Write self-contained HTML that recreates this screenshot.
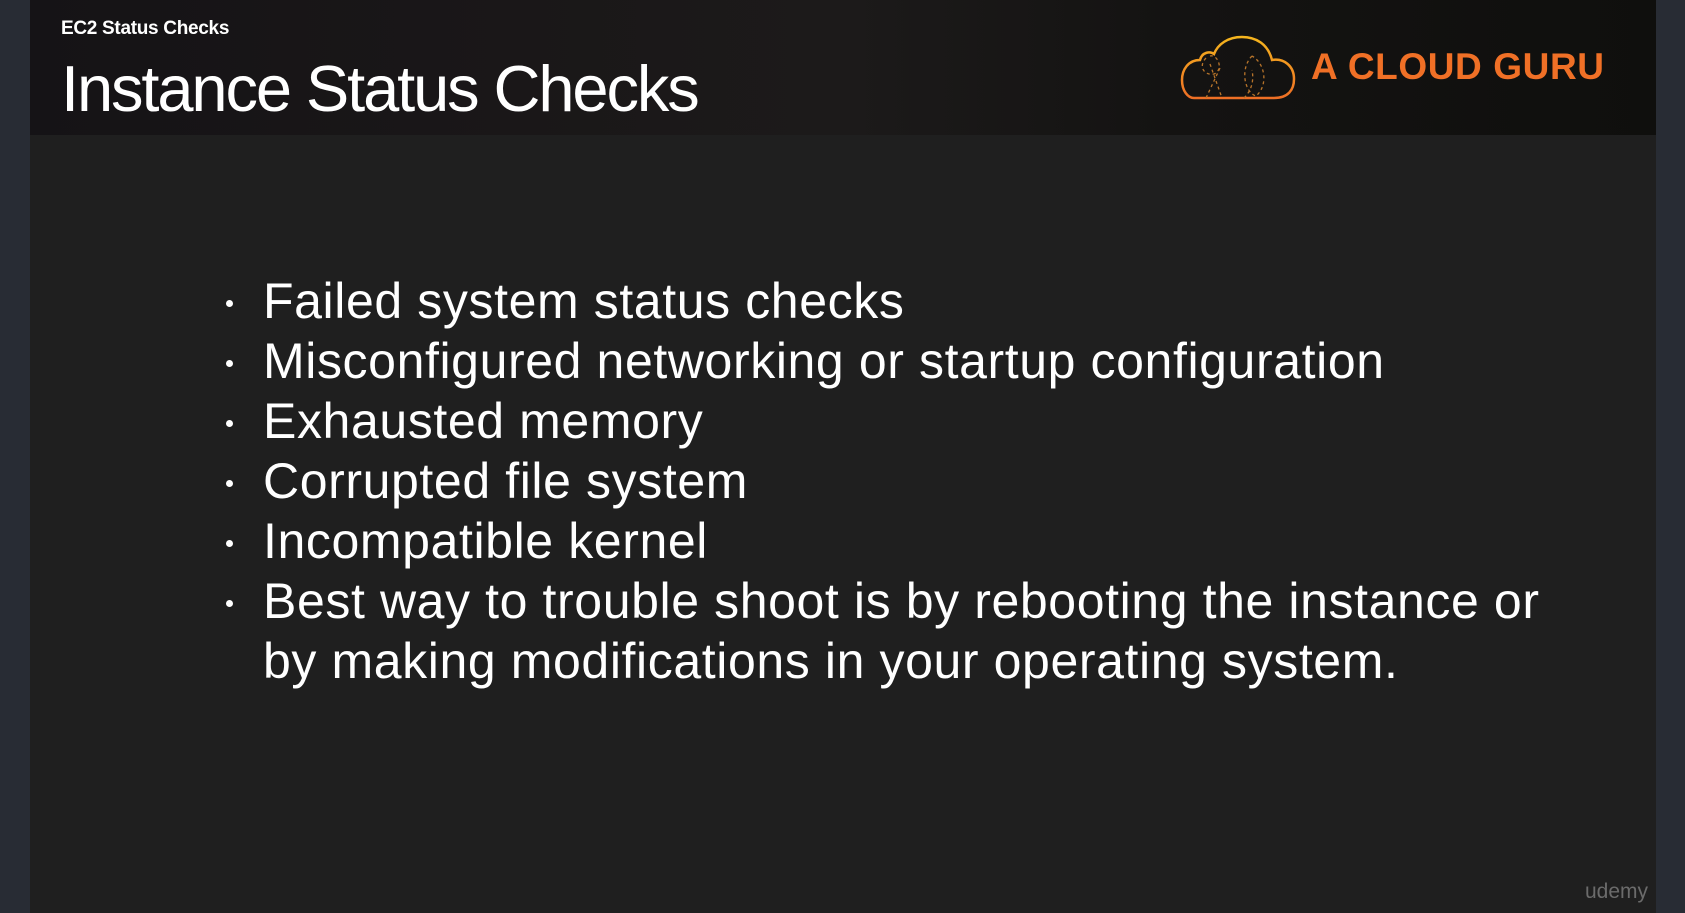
<!DOCTYPE html>
<html><head><meta charset="utf-8"><style>
html,body{margin:0;padding:0;width:1685px;height:913px;overflow:hidden;background:#282c34;font-family:"Liberation Sans",sans-serif}
.slide{position:absolute;left:30px;top:0;width:1626px;height:913px;background:#1f1f1f}
.hdr{position:absolute;left:0;top:0;width:1626px;height:135px;background:linear-gradient(90deg,#151316 0%,#1a1718 30%,#1c1a1a 50%,#141312 70%,#0f0f0d 100%)}
.sub{position:absolute;left:31px;top:18px;color:#fff;font-size:19px;font-weight:bold;letter-spacing:-0.3px}
.title{position:absolute;left:31px;top:51px;color:#fff;font-size:65px;letter-spacing:-2.1px;white-space:nowrap}
.brand{position:absolute;left:1281px;top:46px;color:#f07026;font-size:37px;font-weight:bold;letter-spacing:0.6px}
ul{position:absolute;left:0;top:271px;margin:0;padding:0;list-style:none}
li{position:absolute;left:233px;color:#fff;font-size:50px;letter-spacing:0.6px;white-space:nowrap;line-height:60px}
li:before{content:"";position:absolute;left:-37px;top:29px;width:7px;height:7px;border-radius:50%;background:#fff}
.nb:before{display:none}
.ud{position:absolute;left:1555px;top:880px;color:#6b6b6b;font-size:21px}
</style></head><body>
<div class="slide">
<div class="hdr"></div>
<div class="sub">EC2 Status Checks</div>
<div class="title">Instance Status Checks</div>
<svg style="position:absolute;left:1150px;top:34px" width="116" height="68" viewBox="0 0 116 68">
<defs><linearGradient id="g" x1="0" y1="0" x2="0" y2="1"><stop offset="0" stop-color="#f5b51e"/><stop offset="1" stop-color="#ee6f25"/></linearGradient></defs>
<path d="M14 64 H94 C108 64 114 56 114 45 C114 32 104 24 92 26 C88 10 76 3 62 3 C48 3 38 10 34 20 C30 17 22 18 20 26 C8 26 2 36 2 46 C2 57 8 64 14 64 Z" fill="none" stroke="url(#g)" stroke-width="2.5"/>
<path d="M26 24 C18 32 24 42 34 40 C44 36 38 20 30 22 M30 30 L42 64 M40 34 L26 64 M72 22 C60 34 64 58 76 62 C88 52 86 30 72 22 M64 64 C72 56 74 46 72 36" fill="none" stroke="#b8742a" stroke-width="1.3" stroke-dasharray="3 3"/>
</svg>
<div class="brand">A CLOUD GURU</div>
<ul>
<li style="top:0">Failed system status checks</li>
<li style="top:60px">Misconfigured networking or startup configuration</li>
<li style="top:120px">Exhausted memory</li>
<li style="top:180px">Corrupted file system</li>
<li style="top:240px">Incompatible kernel</li>
<li style="top:300px">Best way to trouble shoot is by rebooting the instance or</li>
<li style="top:360px" class="nb">by making modifications in your operating system.</li>
</ul>
<div class="ud">udemy</div>
</div>
</body></html>
